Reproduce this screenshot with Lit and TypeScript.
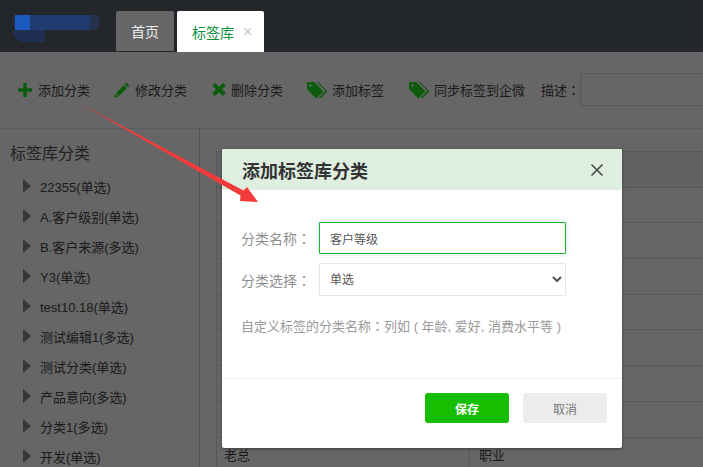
import { LitElement, html, css, svg } from "lit";
import { customElement } from "lit/decorators.js";

const CATEGORIES = [
  "22355(单选)", "A.客户级别(单选)", "B.客户来源(多选)", "Y3(单选)", "test10.18(单选)",
  "测试编辑1(多选)", "测试分类(单选)", "产品意向(多选)", "分类1(多选)", "开发(单选)",
];

const plusIcon = svg`<path d="M5.2 0h3.6v5.2H14v3.6H8.8V14H5.2V8.8H0V5.2h5.2z" />`;
const pencilIcon = svg`<path d="M12.3.6 15.4 3.7 13.9 5.2 10.8 2.1zM10 2.9l3.1 3.1-8 8-3.1-3.1zM1.4 11.7l2.9 2.9L0 16z" />`;
const crossIcon = svg`<path d="M3 1 7 4.7 11 1l2.8 2.8L10 7.2l3.8 3.9-2.8 2.8-4-3.7-4 3.7-2.8-2.8L4 7.2.2 3.8z" />`;
const tagIcon = svg`<path fill-rule="evenodd" d="M1 0h6.2l8.4 8.6a1.2 1.2 0 0 1 0 1.7l-5.6 5.4a1.2 1.2 0 0 1-1.7 0L0 7V1a1 1 0 0 1 1-1zm2.4 2.2a1.3 1.3 0 1 0 0 2.6 1.3 1.3 0 0 0 0-2.6z" /><path d="M9.5 0h1.6l8.4 8.6a1.2 1.2 0 0 1 0 1.7l-5.8 5.6a1.2 1.2 0 0 1-1.6 0l-.4-.4 5.9-5.7a1.3 1.3 0 0 0 0-1.8z" />`;

@customElement("app-root")
export class AppRoot extends LitElement {
  static styles = css`
    :host {
      display: block;
      position: relative;
      width: 703px;
      height: 467px;
      overflow: hidden;
      background: #fff;
      font-family: "Liberation Sans", "Noto Sans CJK SC", sans-serif;
      color: #444;
    }
    .colon { font-family: "Noto Sans CJK TC", sans-serif; }
    .topbar {
      height: 52px;
      box-sizing: border-box;
      background: #23262b;
      display: flex;
      align-items: flex-end;
      padding-top: 11px;
    }
    .logo { width: 116px; align-self: flex-start; flex: none; margin-top: -11px; }
    .logo svg { display: block; }
    .tab {
      box-sizing: border-box;
      height: 40px;
      display: flex;
      align-items: center;
      font-size: 14px;
      border-radius: 2px 2px 0 0;
    }
    .tab.home {
      width: 58px;
      justify-content: center;
      background: #666;
      color: #eee;
      margin-bottom: 1px;
      margin-right: 3px;
    }
    .tab.active {
      width: 87px;
      height: 41px;
      padding-left: 15px;
      background: #fff;
      color: #0b8f3c;
    }
    .tab.active .x { margin-left: 9px; color: #c8c8c8; font-size: 16px; line-height: 1; }
    .toolbar {
      height: 77px;
      box-sizing: border-box;
      border-bottom: 1px solid #e6e6e6;
      display: flex;
      align-items: center;
      padding: 0 0 1px 18px;
      font-size: 13px;
      white-space: nowrap;
    }
    .tool { display: flex; align-items: center; gap: 5px; margin-right: 24px; }
    .tool:nth-child(even) { margin-right: 25px; }
    .tool svg { fill: #20e020; flex: none; display: block; }
    .tool.last { margin-right: 16px; }
    .desc {
      width: 200px;
      height: 33px;
      box-sizing: border-box;
      border: 1px solid #ddd;
      flex: none;
    }
    .body { display: flex; height: 338px; }
    .side {
      width: 200px;
      flex: none;
      box-sizing: border-box;
      border-right: 1px solid #ccc;
      padding-left: 10px;
    }
    .side h2 {
      margin: 0;
      height: 42px;
      line-height: 50px;
      font-size: 16px;
      font-weight: 400;
      color: #555;
    }
    .side ul { list-style: none; margin: 0; padding: 0 0 0 13px; }
    .side li {
      height: 30px;
      display: flex;
      align-items: center;
      gap: 9px;
      font-size: 13px;
      white-space: nowrap;
      color: #444;
    }
    .tri {
      flex: none;
      width: 0;
      height: 0;
      border-left: 8px solid #8a8a8a;
      border-top: 7px solid transparent;
      border-bottom: 7px solid transparent;
    }
    .table { flex: 1; padding: 22px 0 0 16px; min-width: 0; }
    .row {
      display: grid;
      grid-template-columns: 252px 1fr;
      height: 35.7px;
      box-sizing: border-box;
      border-top: 1px solid #dcdcdc;
      border-left: 1px solid #dcdcdc;
      font-size: 13px;
    }
    .row.head { background: #f2f2f2; }
    .row > span { padding: 7px 0 0 7px; }
    .row > span + span { border-left: 1px solid #dcdcdc; padding-left: 9px; }
    .dim { position: absolute; left: 0; right: 0; top: 52px; bottom: 0; background: rgba(0, 0, 0, 0.6); }
    .modal {
      position: absolute;
      left: 222px;
      top: 149px;
      width: 400px;
      height: 299px;
      background: #fff;
      border-radius: 2px;
      box-shadow: 0 1px 3px rgba(0, 0, 0, 0.4);
      display: flex;
      flex-direction: column;
      overflow: hidden;
    }
    .m-head {
      height: 41px;
      flex: none;
      background: #dfefdf;
      display: flex;
      align-items: center;
      justify-content: space-between;
      padding: 0 18px 0 20px;
    }
    .m-head h3 { margin: 0; font-size: 18px; font-weight: 700; color: #333; }
    .m-head svg { display: block; stroke: #444; stroke-width: 1.5; fill: none; }
    .m-body {
      height: 188px;
      flex: none;
      box-sizing: border-box;
      padding: 32px 0 0 19px;
    }
    .form {
      display: grid;
      grid-template-columns: 78px 247px;
      grid-template-rows: 32px 33px;
      row-gap: 9px;
      align-items: center;
      font-size: 14px;
      color: #8f8f8f;
    }
    .form input, .form select {
      width: 100%;
      height: 100%;
      box-sizing: border-box;
      font-family: inherit;
      font-size: 12px;
      color: #555;
      background: #fff;
      border-radius: 1px;
      outline: none;
      margin: 0;
    }
    .form input {
      border: 1px solid #26b526;
      padding: 0 10px;
      box-shadow: 0 0 5px rgba(120, 170, 240, 0.45);
    }
    .form select { border: 1px solid #e6e6e6; padding: 0 6px; }
    .hint { margin: 20px 0 0; font-size: 13px; line-height: 19px; color: #999; }
    .m-foot {
      flex: 1;
      border-top: 1px solid #eee;
      display: flex;
      justify-content: flex-end;
      gap: 14px;
      padding: 14px 15px 0;
    }
    .btn {
      width: 84px;
      height: 30px;
      border: 0;
      border-radius: 3px;
      font-family: inherit;
      font-size: 12px;
      padding: 0;
    }
    .btn.save { background: #15bf00; color: #fff; font-weight: 700; }
    .btn.cancel { background: #ececec; color: #777; }
    .arrow { position: absolute; left: 0; top: 0; pointer-events: none; display: block; }
  `;

  private tool(icon: unknown, w: number, h: number, label: string, cls = "") {
    return html`<div class="tool ${cls}">
      <svg width=${w} height=${h} viewBox="0 0 ${w} ${h}">${icon}</svg><span>${label}</span>
    </div>`;
  }

  render() {
    return html`
      <div class="topbar">
        <div class="logo">
          <svg width="110" height="52" viewBox="0 0 110 52">
            <rect x="13" y="15" width="87" height="15" rx="6" fill="#25304a" />
            <rect x="30" y="15" width="60" height="15" fill="#1f3b6f" />
            <rect x="15" y="15" width="15" height="15" fill="#1b5abf" />
            <path d="M13 30h32v12H24a11 11 0 0 1-11-12z" fill="#1f2f52" />
          </svg>
        </div>
        <div class="tab home">首页</div>
        <div class="tab active">标签库<span class="x">×</span></div>
      </div>
      <div class="toolbar">
        ${this.tool(plusIcon, 15, 14, "添加分类")}
        ${this.tool(pencilIcon, 16, 16, "修改分类")}
        ${this.tool(crossIcon, 14, 15, "删除分类")}
        ${this.tool(tagIcon, 20, 16, "添加标签")}
        ${this.tool(tagIcon, 20, 16, "同步标签到企微", "last")}
        <span>描述<span class="colon">：</span></span>
        <div class="desc"></div>
      </div>
      <div class="body">
        <aside class="side">
          <h2>标签库分类</h2>
          <ul>
            ${CATEGORIES.map((c) => html`<li><i class="tri"></i><span>${c}</span></li>`)}
          </ul>
        </aside>
        <div class="table">
          <div class="row head"><span></span><span></span></div>
          <div class="row"><span></span><span></span></div>
          <div class="row"><span></span><span></span></div>
          <div class="row"><span></span><span></span></div>
          <div class="row"><span></span><span></span></div>
          <div class="row"><span></span><span></span></div>
          <div class="row"><span></span><span></span></div>
          <div class="row"><span></span><span></span></div>
          <div class="row"><span>老总</span><span>职业</span></div>
        </div>
      </div>
      <div class="dim"></div>
      <div class="modal">
        <div class="m-head">
          <h3>添加标签库分类</h3>
          <svg width="14" height="14" viewBox="0 0 14 14"><path d="M1.5 1.5l11 11M12.5 1.5l-11 11" /></svg>
        </div>
        <div class="m-body">
          <div class="form">
            <label>分类名称<span class="colon">：</span></label>
            <input type="text" .value=${"客户等级"} />
            <label>分类选择<span class="colon">：</span></label>
            <select>
              <option>单选</option>
              <option>多选</option>
            </select>
          </div>
          <p class="hint">自定义标签的分类名称<span class="colon">：</span>列如 ( 年龄, 爱好, 消费水平等 )</p>
        </div>
        <div class="m-foot">
          <button class="btn save">保存</button>
          <button class="btn cancel">取消</button>
        </div>
      </div>
      <svg class="arrow" width="703" height="467" viewBox="0 0 703 467">
        <polygon points="81,104 243.5,190.4 247,187 258,202 240,201 240.5,195.6" fill="#f43b3b" />
      </svg>
    `;
  }
}
